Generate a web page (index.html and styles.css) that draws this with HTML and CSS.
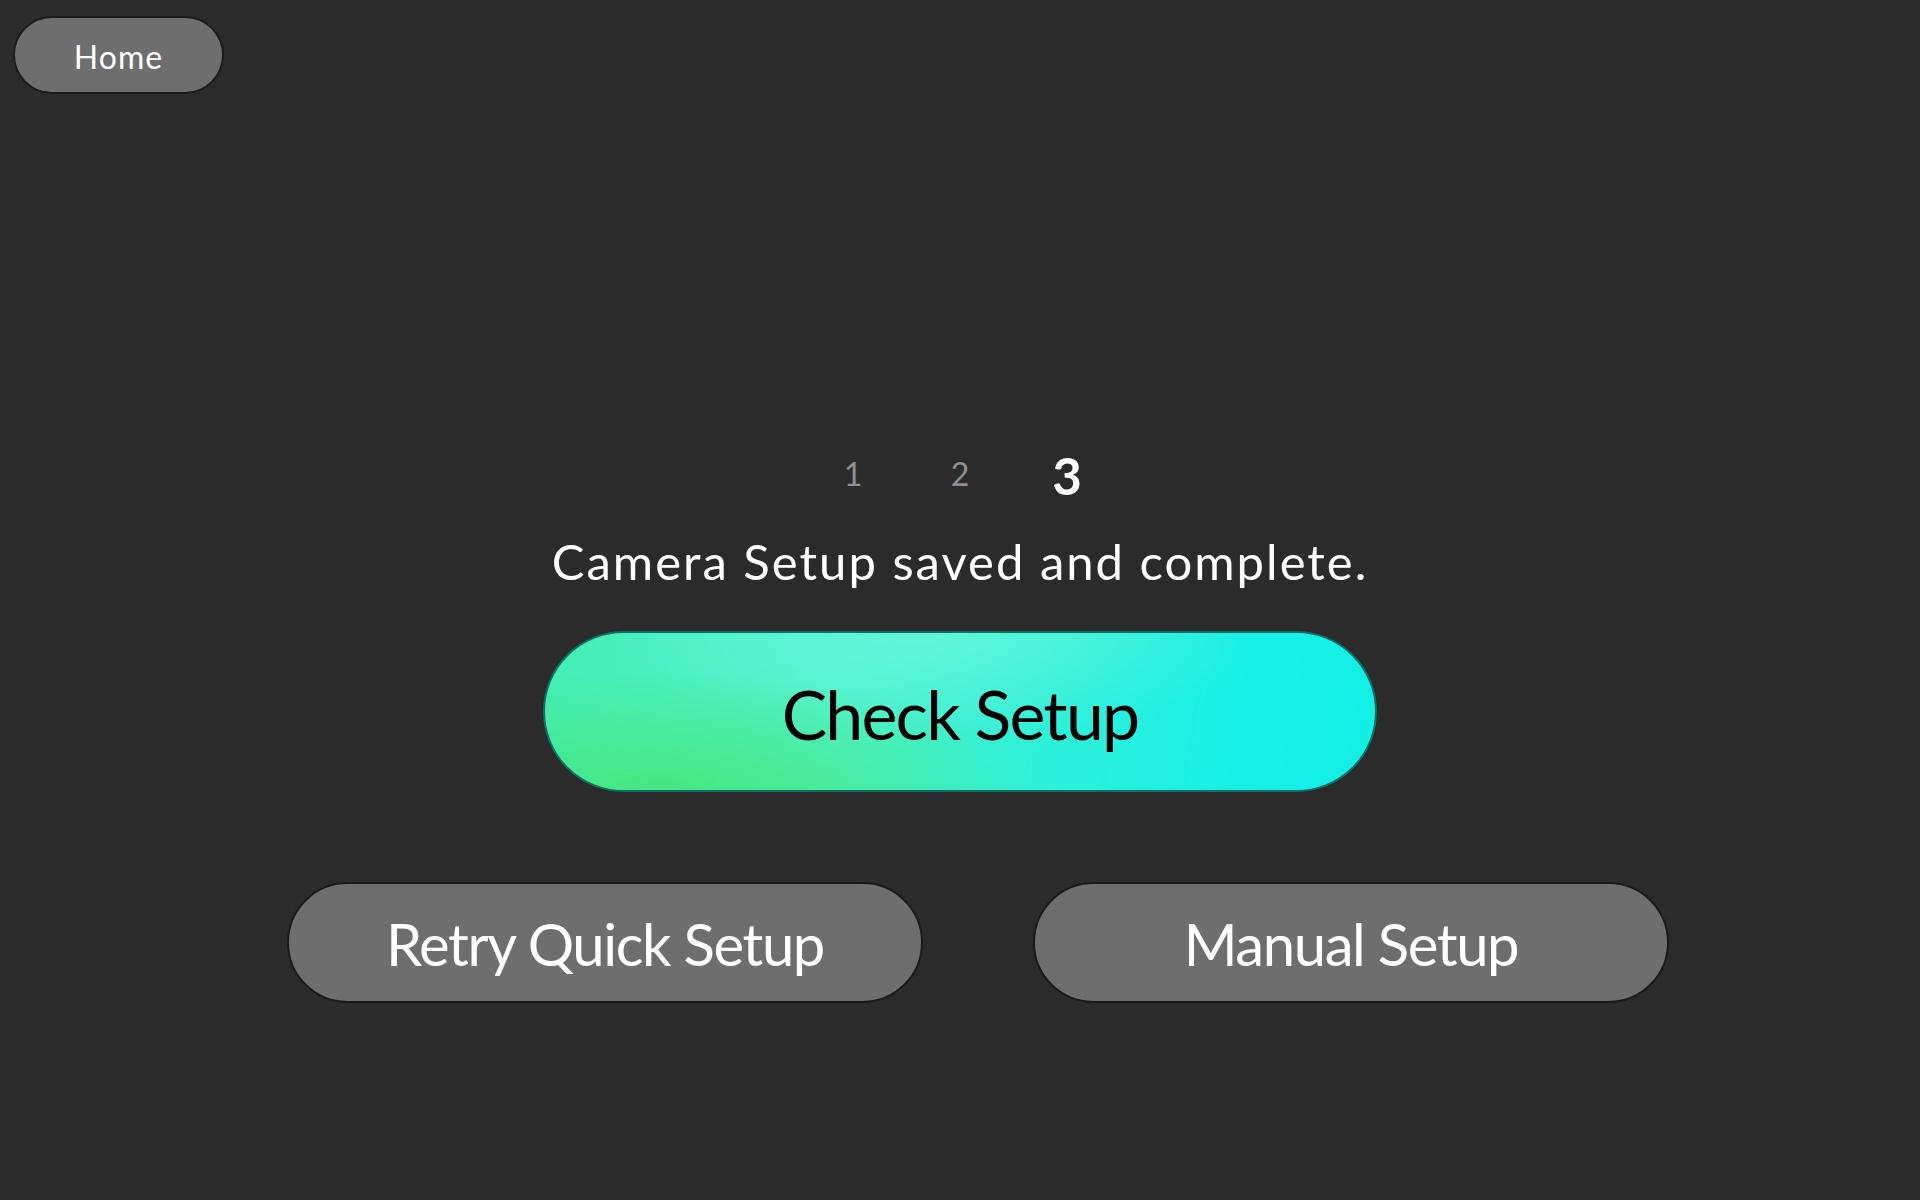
FILE: index.html
```html
<!DOCTYPE html>
<html lang="en">
<head>
<meta charset="utf-8">
<title>Camera Setup</title>
<link rel="stylesheet" href="styles.css">
</head>
<body>
<div class="page">
  <button class="btn home">Home</button>
  <main class="content">
    <div class="steps">
      <span class="step">1</span>
      <span class="step">2</span>
      <span class="step current">3</span>
    </div>
    <p class="message">Camera Setup saved and complete.</p>
    <button class="btn check">Check Setup</button>
    <div class="actions">
      <button class="btn secondary">Retry Quick Setup</button>
      <button class="btn secondary">Manual Setup</button>
    </div>
  </main>
</div>
</body>
</html>
```

FILE: styles.css
```css
html, body {
  margin: 0;
  padding: 0;
  background: #2b2b2b;
  height: 100%;
}
body {
  font-family: "Lato", "Open Sans", sans-serif;
  color: #ffffff;
}
.page {
  padding: 16px 13px;
  box-sizing: border-box;
  min-height: 100vh;
}
.btn {
  font-family: inherit;
  box-sizing: border-box;
  border-style: solid;
  cursor: pointer;
  display: flex;
  align-items: center;
  justify-content: center;
  padding: 0;
  font-weight: 400;
}
.home {
  width: 211px;
  height: 78px;
  border-radius: 39px;
  border-width: 2px;
  border-color: #1a1a1a;
  background: #6e6e6e;
  color: #ffffff;
  font-size: 32px;
  letter-spacing: 1px;
  padding-top: 2px;
}
.content {
  display: flex;
  flex-direction: column;
  align-items: center;
  margin-top: 351px;
}
.steps {
  display: grid;
  grid-template-columns: repeat(3, 107px);
  height: 60px;
}
.step {
  display: flex;
  align-items: center;
  justify-content: center;
  color: #8f8f8f;
  font-size: 32px;
  font-weight: 400;
  padding-bottom: 4px;
}
.step.current {
  color: #ffffff;
  font-size: 51px;
  font-weight: 700;
  padding-bottom: 0;
}
.message {
  margin: 26px 0 0;
  font-size: 49px;
  line-height: 60px;
  font-weight: 400;
  letter-spacing: 2px;
}
.check {
  margin-top: 40px;
  width: 834px;
  height: 161px;
  border-radius: 81px;
  border-width: 2px;
  border-color: #0e6f66;
  color: #000000;
  font-size: 68px;
  letter-spacing: -1.8px;
  padding-top: 4px;
  background:
    radial-gradient(ellipse 45% 80% at 14% 105%, rgba(70, 230, 120, 0.95) 0%, rgba(70, 230, 120, 0) 100%),
    radial-gradient(ellipse 40% 70% at 45% 0%, rgba(100, 246, 220, 0.9) 0%, rgba(100, 246, 220, 0) 100%),
    linear-gradient(100deg, #44eeb4 0%, #4ff2c8 35%, #2ef0d8 60%, #16f0e8 85%, #14efe6 100%);
}
.actions {
  display: flex;
  gap: 110px;
  margin-top: 90px;
  margin-left: 36px;
}
.secondary {
  width: 636px;
  height: 121px;
  border-radius: 61px;
  border-width: 2px;
  border-color: #1a1a1a;
  background: #6e6e6e;
  color: #ffffff;
  font-size: 58px;
  letter-spacing: -1.4px;
  padding-top: 2px;
}
```
